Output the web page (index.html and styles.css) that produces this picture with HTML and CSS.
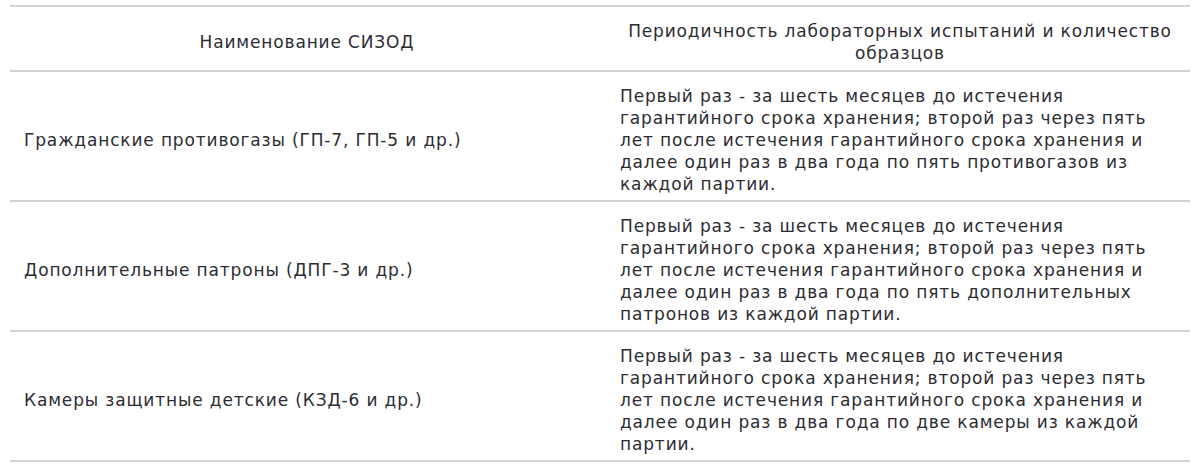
FILE: index.html
```html
<!DOCTYPE html>
<html lang="ru">
<head>
<meta charset="utf-8">
<link rel="stylesheet" href="styles.css">
</head>
<body>
<div class="wrap">
  <table class="tbl">
    <thead>
      <tr>
        <th class="c1">Наименование СИЗОД</th>
        <th class="c2">Периодичность лабораторных испытаний и количество<br>образцов</th>
      </tr>
    </thead>
    <tbody>
      <tr>
        <td class="c1">Гражданские противогазы (ГП-7, ГП-5 и др.)</td>
        <td class="c2">Первый раз - за шесть месяцев до истечения<br>гарантийного срока хранения; второй раз через пять<br>лет после истечения гарантийного срока хранения и<br>далее один раз в два года по пять противогазов из<br>каждой партии.</td>
      </tr>
      <tr>
        <td class="c1">Дополнительные патроны (ДПГ-3 и др.)</td>
        <td class="c2">Первый раз - за шесть месяцев до истечения<br>гарантийного срока хранения; второй раз через пять<br>лет после истечения гарантийного срока хранения и<br>далее один раз в два года по пять дополнительных<br>патронов из каждой партии.</td>
      </tr>
      <tr>
        <td class="c1">Камеры защитные детские (КЗД-6 и др.)</td>
        <td class="c2">Первый раз - за шесть месяцев до истечения<br>гарантийного срока хранения; второй раз через пять<br>лет после истечения гарантийного срока хранения и<br>далее один раз в два года по две камеры из каждой<br>партии.</td>
      </tr>
    </tbody>
  </table>
</div>
</body>
</html>
```

FILE: styles.css
```css
html, body {
  margin: 0;
  padding: 0;
  background: #ffffff;
}

.wrap {
  padding: 5px 10px 0 10px;
}

.tbl {
  width: 1180px;
  border-collapse: collapse;
  font-family: "DejaVu Sans", sans-serif;
  font-size: 17px;
  letter-spacing: 0.85px;
  line-height: 22px;
  color: #2c2c32;
}

.tbl th,
.tbl td {
  border-top: 2px solid #d3d3d3;
  border-bottom: 2px solid #d3d3d3;
  vertical-align: middle;
  text-align: left;
  font-weight: 400;
  white-space: nowrap;
}

.tbl th {
  text-align: center;
  height: 44px;
  padding: 13px 10px 6px 10px;
}

.tbl td {
  height: 112px;
  padding: 12px 10px 4px 10px;
}

.tbl .c1 {
  width: 566px;
  padding-left: 14px;
}

.tbl .c2 {
  padding-left: 20px;
}

.tbl th.c1 {
  padding-left: 14px;
}
```
